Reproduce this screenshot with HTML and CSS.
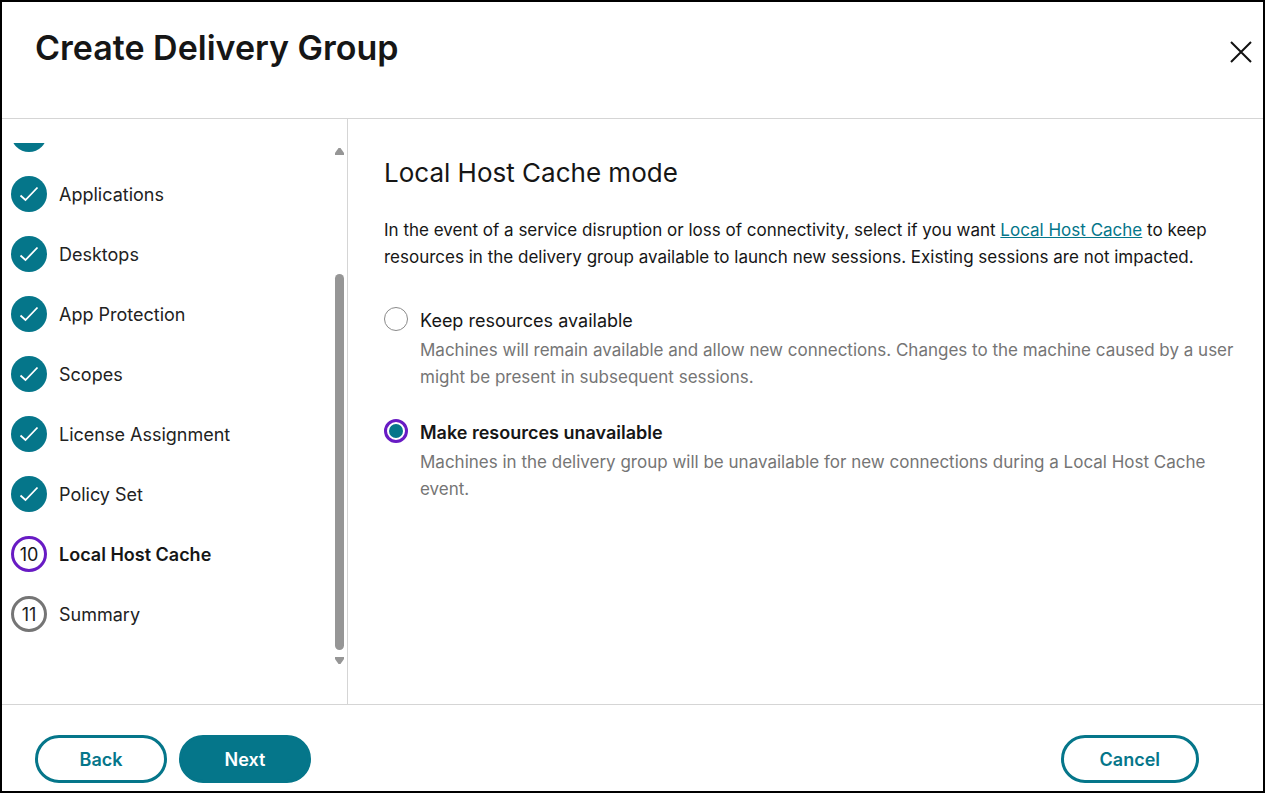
FILE: index.html
```html
<!DOCTYPE html>
<html lang="en">
<head>
  <meta charset="UTF-8" />
  <meta name="viewport" content="width=device-width, initial-scale=1.0"/>
  <title>Create Delivery Group</title>
  <link rel="stylesheet" href="styles.css">
</head>
<body>
  <svg class="sprite" aria-hidden="true">
    <symbol id="check" viewBox="0 0 36 36">
      <path d="M9.500 19.500L14.500 24L26.500 11.500" fill="none" stroke="currentColor" stroke-width="1.800"/>
    </symbol>
  </svg>

  <header class="header">
    <h1>Create Delivery Group</h1>
    <button class="close" type="button" aria-label="Close">
      <svg width="22" height="22" viewBox="0 0 22 22">
        <path d="M1 1L21 21M21 1L1 21" fill="none" stroke="currentColor" stroke-width="2"/>
      </svg>
    </button>
  </header>

  <div class="wizard">
    <nav class="sidebar">
      <ol class="steps">
        <li class="step done"><span class="badge"><svg><use href="#check"/></svg></span></li>
        <li class="step done"><span class="badge"><svg><use href="#check"/></svg></span>Applications</li>
        <li class="step done"><span class="badge"><svg><use href="#check"/></svg></span>Desktops</li>
        <li class="step done"><span class="badge"><svg><use href="#check"/></svg></span>App Protection</li>
        <li class="step done"><span class="badge"><svg><use href="#check"/></svg></span>Scopes</li>
        <li class="step done"><span class="badge"><svg><use href="#check"/></svg></span>License Assignment</li>
        <li class="step done"><span class="badge"><svg><use href="#check"/></svg></span>Policy Set</li>
        <li class="step current"><span class="badge">10</span>Local Host Cache</li>
        <li class="step"><span class="badge">11</span>Summary</li>
      </ol>
      <div class="scrollbar" aria-hidden="true">
        <svg width="9" height="7" viewBox="0 0 9 7"><path d="M3.500 0H5.500L9 5V7H0V5Z" fill="currentColor"/></svg>
        <div class="track"><div class="thumb"></div></div>
        <svg width="9" height="7" viewBox="0 0 9 7"><path d="M0 0H9V2L5.500 7H3.500L0 2Z" fill="currentColor"/></svg>
      </div>
    </nav>

    <main class="content">
      <h2>Local Host Cache mode</h2>
      <p class="intro">In the event of a service disruption or loss of connectivity, select if you want <a href="#">Local Host Cache</a> to keep resources in the delivery group available to launch new sessions. Existing sessions are not impacted.</p>

      <div class="option">
        <input type="radio" name="mode" id="keep" />
        <div>
          <label for="keep">Keep resources available</label>
          <p>Machines will remain available and allow new connections. Changes to the machine caused by a user might be present in subsequent sessions.</p>
        </div>
      </div>
      <div class="option">
        <input type="radio" name="mode" id="unavailable" checked />
        <div>
          <label for="unavailable">Make resources unavailable</label>
          <p>Machines in the delivery group will be unavailable for new connections during a Local Host Cache event.</p>
        </div>
      </div>
    </main>
  </div>

  <footer class="footer">
    <button class="btn" type="button">Back</button>
    <button class="btn primary" type="button">Next</button>
    <button class="btn cancel" type="button">Cancel</button>
  </footer>
</body>
</html>
```
FILE: styles.css
```css
* {
  box-sizing: border-box;
  margin: 0;
  padding: 0;
}

body {
  display: flex;
  flex-direction: column;
  min-height: 100vh;
  border: 2px solid #000;
  background: #fff;
  color: #161616;
  font-family: Inter, "Liberation Sans", sans-serif;
  font-size: 18px;
  line-height: 27px;
}

.sprite {
  position: absolute;
  width: 0;
  height: 0;
}

.header {
  display: flex;
  justify-content: space-between;
  align-items: flex-start;
  padding: 24px 8px 48px 33px;
  border-bottom: 1px solid #d5d5d5;
}

h1 {
  font-size: 34px;
  font-weight: 600;
  line-height: 44px;
}

.close {
  display: flex;
  margin-top: 12px;
  padding: 3px;
  border: none;
  background: none;
  color: #111;
  cursor: pointer;
}

.wizard {
  display: flex;
  flex: 1;
}

.sidebar {
  display: flex;
  flex: 0 0 346px;
  padding: 24px 3px 36px 9px;
  border-right: 1px solid #d5d5d5;
}

/* scrolled to the end, earlier steps are cut off at the top */
.steps {
  display: flex;
  flex: 1;
  flex-direction: column;
  justify-content: flex-end;
  height: 525px;
  padding-bottom: 24px;
  overflow: hidden;
  list-style: none;
}

.step {
  display: flex;
  flex: none;
  align-items: center;
  gap: 12px;
  height: 60px;
  color: #222;
}

.badge {
  display: flex;
  align-items: center;
  justify-content: center;
  width: 36px;
  height: 36px;
  border: 3px solid #757575;
  border-radius: 50%;
  font-weight: 400;
}

.badge svg {
  width: 36px;
  height: 36px;
}

.done .badge {
  border: none;
  background: #05768a;
  color: #fff;
}

.current {
  color: #161616;
  font-weight: 600;
}

.current .badge {
  border-color: #681bc4;
}

.scrollbar {
  display: flex;
  flex-direction: column;
  gap: 7px;
  width: 9px;
  padding: 5px 0 4px;
  color: #969696;
}

.track {
  display: flex;
  flex: 1;
  align-items: flex-end;
}

.thumb {
  width: 9px;
  height: 77%;
  border-radius: 5px;
  background: #969696;
}

.content {
  flex: 1;
  padding: 36px 4px 36px 36px;
}

h2 {
  margin-bottom: 26px;
  font-size: 26px;
  font-weight: 400;
  line-height: 36px;
}

p {
  font-size: 17px;
}

.intro {
  margin-bottom: 36px;
}

a {
  color: #05768a;
  text-decoration: underline;
}

.option {
  display: flex;
  gap: 12px;
  margin-bottom: 28px;
}

.option input {
  flex: none;
  appearance: none;
  width: 24px;
  height: 24px;
  border: 1px solid #8a8a8a;
  border-radius: 50%;
}

.option input:checked {
  border: 3px solid #681bc4;
  padding: 2px;
  background: #05768a content-box;
}

.option label {
  display: block;
  margin-bottom: 3px;
}

.option input:checked + div label {
  font-weight: 600;
}

.option p {
  color: #757575;
}

.footer {
  display: flex;
  gap: 12px;
  padding: 30px 64px 8px 33px;
  border-top: 1px solid #d5d5d5;
}

.btn {
  min-width: 132px;
  height: 48px;
  padding: 0 36px;
  border: 3px solid #05768a;
  border-radius: 24px;
  background: #fff;
  color: #05768a;
  font: inherit;
  font-weight: 600;
  cursor: pointer;
}

.primary {
  background: #05768a;
  color: #fff;
}

.cancel {
  margin-left: auto;
}
```
